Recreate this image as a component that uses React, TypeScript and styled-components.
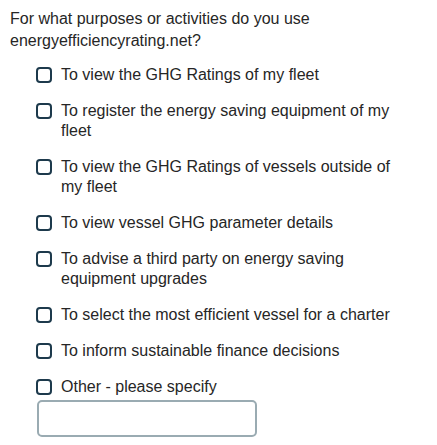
import React from "react";
import styled, { createGlobalStyle } from "styled-components";

const Global = createGlobalStyle`
  html, body { margin: 0; padding: 0; background: #ffffff; }
  body { font-family: "Liberation Sans", Arial, sans-serif; color: #262626; }
`;

const Page = styled.div`
  width: 437px;
  box-sizing: border-box;
  padding: 8px 10px 0 10px;
`;

const Question = styled.p`
  margin: 0 0 13px 0;
  font-size: 16px;
  line-height: 22px;
  width: 330px;
`;

const Options = styled.div`
  display: flex;
  flex-direction: column;
  gap: 16px;
  padding-left: 26px;
  width: 370px;
`;

const Option = styled.label`
  display: flex;
  align-items: flex-start;
  gap: 9px;
  font-size: 16px;
  line-height: 20px;
`;

const Box = styled.span`
  flex: 0 0 auto;
  box-sizing: border-box;
  width: 16px;
  height: 16px;
  margin-top: 2px;
  border: 2px solid #1d3a4c;
  border-radius: 4px;
  background: #fff;
`;

const Text = styled.span`
  flex: 1;
`;

const OtherInput = styled.input`
  box-sizing: border-box;
  margin: -13px 0 0 1px;
  width: 220px;
  height: 37px;
  border: 2px solid #9aabb2;
  border-radius: 5px;
  outline: none;
  font-family: inherit;
  font-size: 16px;
`;

const options = [
  "To view the GHG Ratings of my fleet",
  "To register the energy saving equipment of my fleet",
  "To view the GHG Ratings of vessels outside of my fleet",
  "To view vessel GHG parameter details",
  "To advise a third party on energy saving equipment upgrades",
  "To select the most efficient vessel for a charter",
  "To inform sustainable finance decisions",
  "Other - please specify",
];

export default function App() {
  return (
    <>
      <Global />
      <Page>
        <Question>For what purposes or activities do you use energyefficiencyrating.net?</Question>
        <Options>
          {options.map((o) => (
            <Option key={o}>
              <Box />
              <Text>{o}</Text>
            </Option>
          ))}
          <OtherInput type="text" />
        </Options>
      </Page>
    </>
  );
}
